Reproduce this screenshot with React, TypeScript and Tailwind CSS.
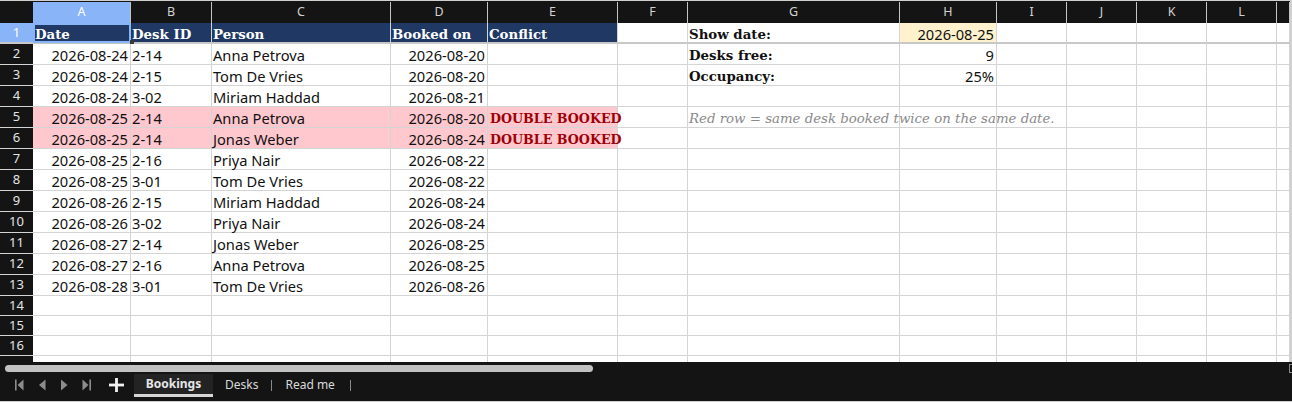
import React from "react";

type Col = { key: string; w: string };

const COLS: Col[] = [
  { key: "A", w: "w-[98px]" },
  { key: "B", w: "w-[81px]" },
  { key: "C", w: "w-[179px]" },
  { key: "D", w: "w-[97px]" },
  { key: "E", w: "w-[130px]" },
  { key: "F", w: "w-[70px]" },
  { key: "G", w: "w-[212px]" },
  { key: "H", w: "w-[97px]" },
  { key: "I", w: "w-[70px]" },
  { key: "J", w: "w-[70px]" },
  { key: "K", w: "w-[70px]" },
  { key: "L", w: "w-[70px]" },
  { key: "M", w: "w-[13px]" },
];

type Booking = {
  date: string;
  desk: string;
  person: string;
  booked: string;
  conflict?: boolean;
};

const BOOKINGS: Booking[] = [
  { date: "2026-08-24", desk: "2-14", person: "Anna Petrova", booked: "2026-08-20" },
  { date: "2026-08-24", desk: "2-15", person: "Tom De Vries", booked: "2026-08-20" },
  { date: "2026-08-24", desk: "3-02", person: "Miriam Haddad", booked: "2026-08-21" },
  { date: "2026-08-25", desk: "2-14", person: "Anna Petrova", booked: "2026-08-20", conflict: true },
  { date: "2026-08-25", desk: "2-14", person: "Jonas Weber", booked: "2026-08-24", conflict: true },
  { date: "2026-08-25", desk: "2-16", person: "Priya Nair", booked: "2026-08-22" },
  { date: "2026-08-25", desk: "3-01", person: "Tom De Vries", booked: "2026-08-22" },
  { date: "2026-08-26", desk: "2-15", person: "Miriam Haddad", booked: "2026-08-24" },
  { date: "2026-08-26", desk: "3-02", person: "Priya Nair", booked: "2026-08-24" },
  { date: "2026-08-27", desk: "2-14", person: "Jonas Weber", booked: "2026-08-25" },
  { date: "2026-08-27", desk: "2-16", person: "Anna Petrova", booked: "2026-08-25" },
  { date: "2026-08-28", desk: "3-01", person: "Tom De Vries", booked: "2026-08-26" },
];

const SANS = "font-['Noto_Sans',sans-serif]";
const SERIF = "font-['DejaVu_Serif','Liberation_Serif',serif]";

type CellSpec = {
  text?: React.ReactNode;
  align?: "left" | "right";
  cls?: string;
};

function Cell({ col, spec, rowCls }: { col: Col; spec?: CellSpec; rowCls: string }) {
  const align = spec?.align === "right" ? "justify-end" : "justify-start";
  return (
    <div
      className={`relative shrink-0 ${col.w} ${rowCls} flex items-center ${align} pl-[1px] pr-[2px] whitespace-nowrap overflow-visible border-r border-[#d4d4d4] ${spec?.cls ?? ""}`}
    >
      {spec?.text}
    </div>
  );
}

function RowHeader({ n, active, cls }: { n: number | null; active?: boolean; cls: string }) {
  return (
    <div
      className={`shrink-0 w-[33px] ${cls} flex items-center justify-center ${SANS} text-[13px] ${
        active ? "bg-[#8ab4f8] text-white" : "bg-[#141414] text-[#e4e4e4]"
      }`}
    >
      {n}
    </div>
  );
}

function SheetRow({
  n,
  cells,
  heightCls,
  borderCls,
  active,
}: {
  n: number | null;
  cells: Record<string, CellSpec>;
  heightCls: string;
  borderCls: string;
  active?: boolean;
}) {
  return (
    <div className={`flex shrink-0 ${borderCls}`}>
      <RowHeader n={n} active={active} cls={heightCls} />
      {COLS.map((c) => (
        <Cell key={c.key} col={c} spec={cells[c.key]} rowCls={heightCls} />
      ))}
    </div>
  );
}

function NavIcon({ kind }: { kind: "first" | "prev" | "next" | "last" }) {
  const fill = "#8d8d8d";
  return (
    <svg width="9" height="12" viewBox="0 0 9 12">
      {kind === "first" && (
        <>
          <rect x="0" y="0.5" width="1.6" height="11" fill={fill} />
          <polygon points="8.5,0.5 2.6,6 8.5,11.5" fill={fill} />
        </>
      )}
      {kind === "prev" && <polygon points="7.5,0.5 1,6 7.5,11.5" fill={fill} />}
      {kind === "next" && <polygon points="1,0.5 7.5,6 1,11.5" fill={fill} />}
      {kind === "last" && (
        <>
          <polygon points="0.5,0.5 6.4,6 0.5,11.5" fill={fill} />
          <rect x="7.4" y="0.5" width="1.6" height="11" fill={fill} />
        </>
      )}
    </svg>
  );
}

export default function App() {
  const header = "bg-[#1f3864] border-[#1f3864] text-white font-bold";
  const hdrText = `${SERIF} text-[13.33px] pt-[4px]`;
  const dataText = `${SANS} text-[14.67px] text-[#111] pt-[2px]`;
  const labelText = `${SERIF} text-[13.33px] font-bold text-[#111] pt-[4px]`;

  const row1: Record<string, CellSpec> = {
    A: { text: "Date", cls: `${header} ${hdrText} pl-[2px]` },
    B: { text: "Desk ID", cls: `${header} ${hdrText}` },
    C: { text: "Person", cls: `${header} ${hdrText}` },
    D: { text: "Booked on", cls: `${header} ${hdrText}` },
    E: { text: "Conflict", cls: `${header} ${hdrText}` },
    G: { text: "Show date:", cls: labelText },
    H: { text: "2026-08-25", align: "right", cls: `bg-[#fff2cc] ${dataText}` },
  };

  const side: Record<number, Record<string, CellSpec>> = {
    2: {
      G: { text: "Desks free:", cls: labelText },
      H: { text: "9", align: "right", cls: dataText },
    },
    3: {
      G: { text: "Occupancy:", cls: labelText },
      H: { text: "25%", align: "right", cls: dataText },
    },
    5: {
      G: {
        text: "Red row = same desk booked twice on the same date.",
        cls: `${SERIF} italic text-[13.33px] text-[#8a8a8a] pt-[4px]`,
      },
    },
  };

  return (
    <div className="w-[1292px] h-[402px] bg-[#141414] flex flex-col overflow-hidden border-t border-[#cfcfcf]">
      {/* sheet grid */}
      <div className="flex flex-col h-[361px] bg-white border-r-2 border-[#d0d0d0] overflow-hidden">
        {/* column letters */}
        <div className="flex shrink-0 bg-[#141414] pt-[1px]">
          <div className="shrink-0 w-[33px] h-[21px]" />
          {COLS.map((c) => (
            <div
              key={c.key}
              className={`shrink-0 ${c.w} h-[21px] flex items-center justify-center ${SANS} text-[12.5px] border-r border-[#c4c4c4] ${
                c.key === "A" ? "bg-[#8ab4f8] text-white" : "text-[#d2d2d2]"
              }`}
            >
              {c.key === "M" ? "" : c.key}
            </div>
          ))}
        </div>

        {/* header row with active cell */}
        <div className="relative">
          <SheetRow n={1} cells={row1} heightCls="h-[19px]" borderCls="border-b-2 border-[#c8c8c8]" active />
          <div className="absolute left-[33px] top-0 w-[98px] h-[20px] border-2 border-[#8ab4f8] pointer-events-none" />
          <div className="absolute left-[130px] top-[17px] w-[4px] h-[4px] bg-[#3a3a3a] pointer-events-none" />
        </div>

        {BOOKINGS.map((b, i) => {
          const n = i + 2;
          const pink = b.conflict ? "bg-[#ffc7ce]" : "";
          const cells: Record<string, CellSpec> = {
            A: { text: b.date, align: "right", cls: `${pink} ${dataText}` },
            B: { text: b.desk, cls: `${pink} ${dataText}` },
            C: { text: b.person, cls: `${pink} ${dataText}` },
            D: { text: b.booked, align: "right", cls: `${pink} ${dataText}` },
            E: b.conflict
              ? { text: "DOUBLE BOOKED", cls: `${pink} ${SERIF} text-[12.7px] font-bold text-[#9c0006] pt-[4px] pl-[2px]` }
              : {},
            ...(side[n] ?? {}),
          };
          return (
            <SheetRow
              key={n}
              n={n}
              cells={cells}
              heightCls="h-[20px]"
              borderCls="border-b border-[#d4d4d4]"
            />
          );
        })}

        {[14, 15, 16].map((n) => (
          <SheetRow key={n} n={n} cells={{}} heightCls="h-[19px]" borderCls="border-b border-[#d4d4d4]" />
        ))}
        <SheetRow n={null} cells={{}} heightCls="h-[12px]" borderCls="" />
      </div>

      {/* bottom bar: scrollbar + sheet tabs */}
      <div className="flex flex-col flex-1 bg-[#141414] border-b border-[#cfcfcf]">
        <div className="flex items-center h-[11px] pt-[2px]">
          <div className="ml-[5px] w-[588px] h-[7px] rounded-full bg-[#c2c2c2]" />
          <div className="ml-auto w-[3px] h-[9px] border border-r-0 border-[#8a8a8a]" />
        </div>
        <div className="flex items-center h-[24px]">
          <div className="flex items-center pl-[15px]">
            <NavIcon kind="first" />
            <div className="ml-[14px]">
              <NavIcon kind="prev" />
            </div>
            <div className="ml-[13px]">
              <NavIcon kind="next" />
            </div>
            <div className="ml-[13px]">
              <NavIcon kind="last" />
            </div>
            <svg className="ml-[18px]" width="15" height="14" viewBox="0 0 15 14">
              <rect x="0" y="5.6" width="15" height="2.8" fill="#f2f2f2" />
              <rect x="6.1" y="0" width="2.8" height="14" fill="#f2f2f2" />
            </svg>
          </div>
          <div
            className={`ml-[10px] w-[79px] h-[23px] flex items-center justify-center bg-[#232323] border-b-[3px] border-[#d6d6d6] ${SANS} text-[12px] font-bold text-[#e6e6e6]`}
          >
            Bookings
          </div>
          <div className={`ml-[12px] ${SANS} text-[12px] text-[#dadada]`}>Desks</div>
          <div className="ml-[13px] w-px h-[11px] bg-[#8a8a8a]" />
          <div className={`ml-[13px] ${SANS} text-[12px] text-[#dadada]`}>Read me</div>
          <div className="ml-[15px] w-px h-[11px] bg-[#8a8a8a]" />
        </div>
      </div>
    </div>
  );
}
